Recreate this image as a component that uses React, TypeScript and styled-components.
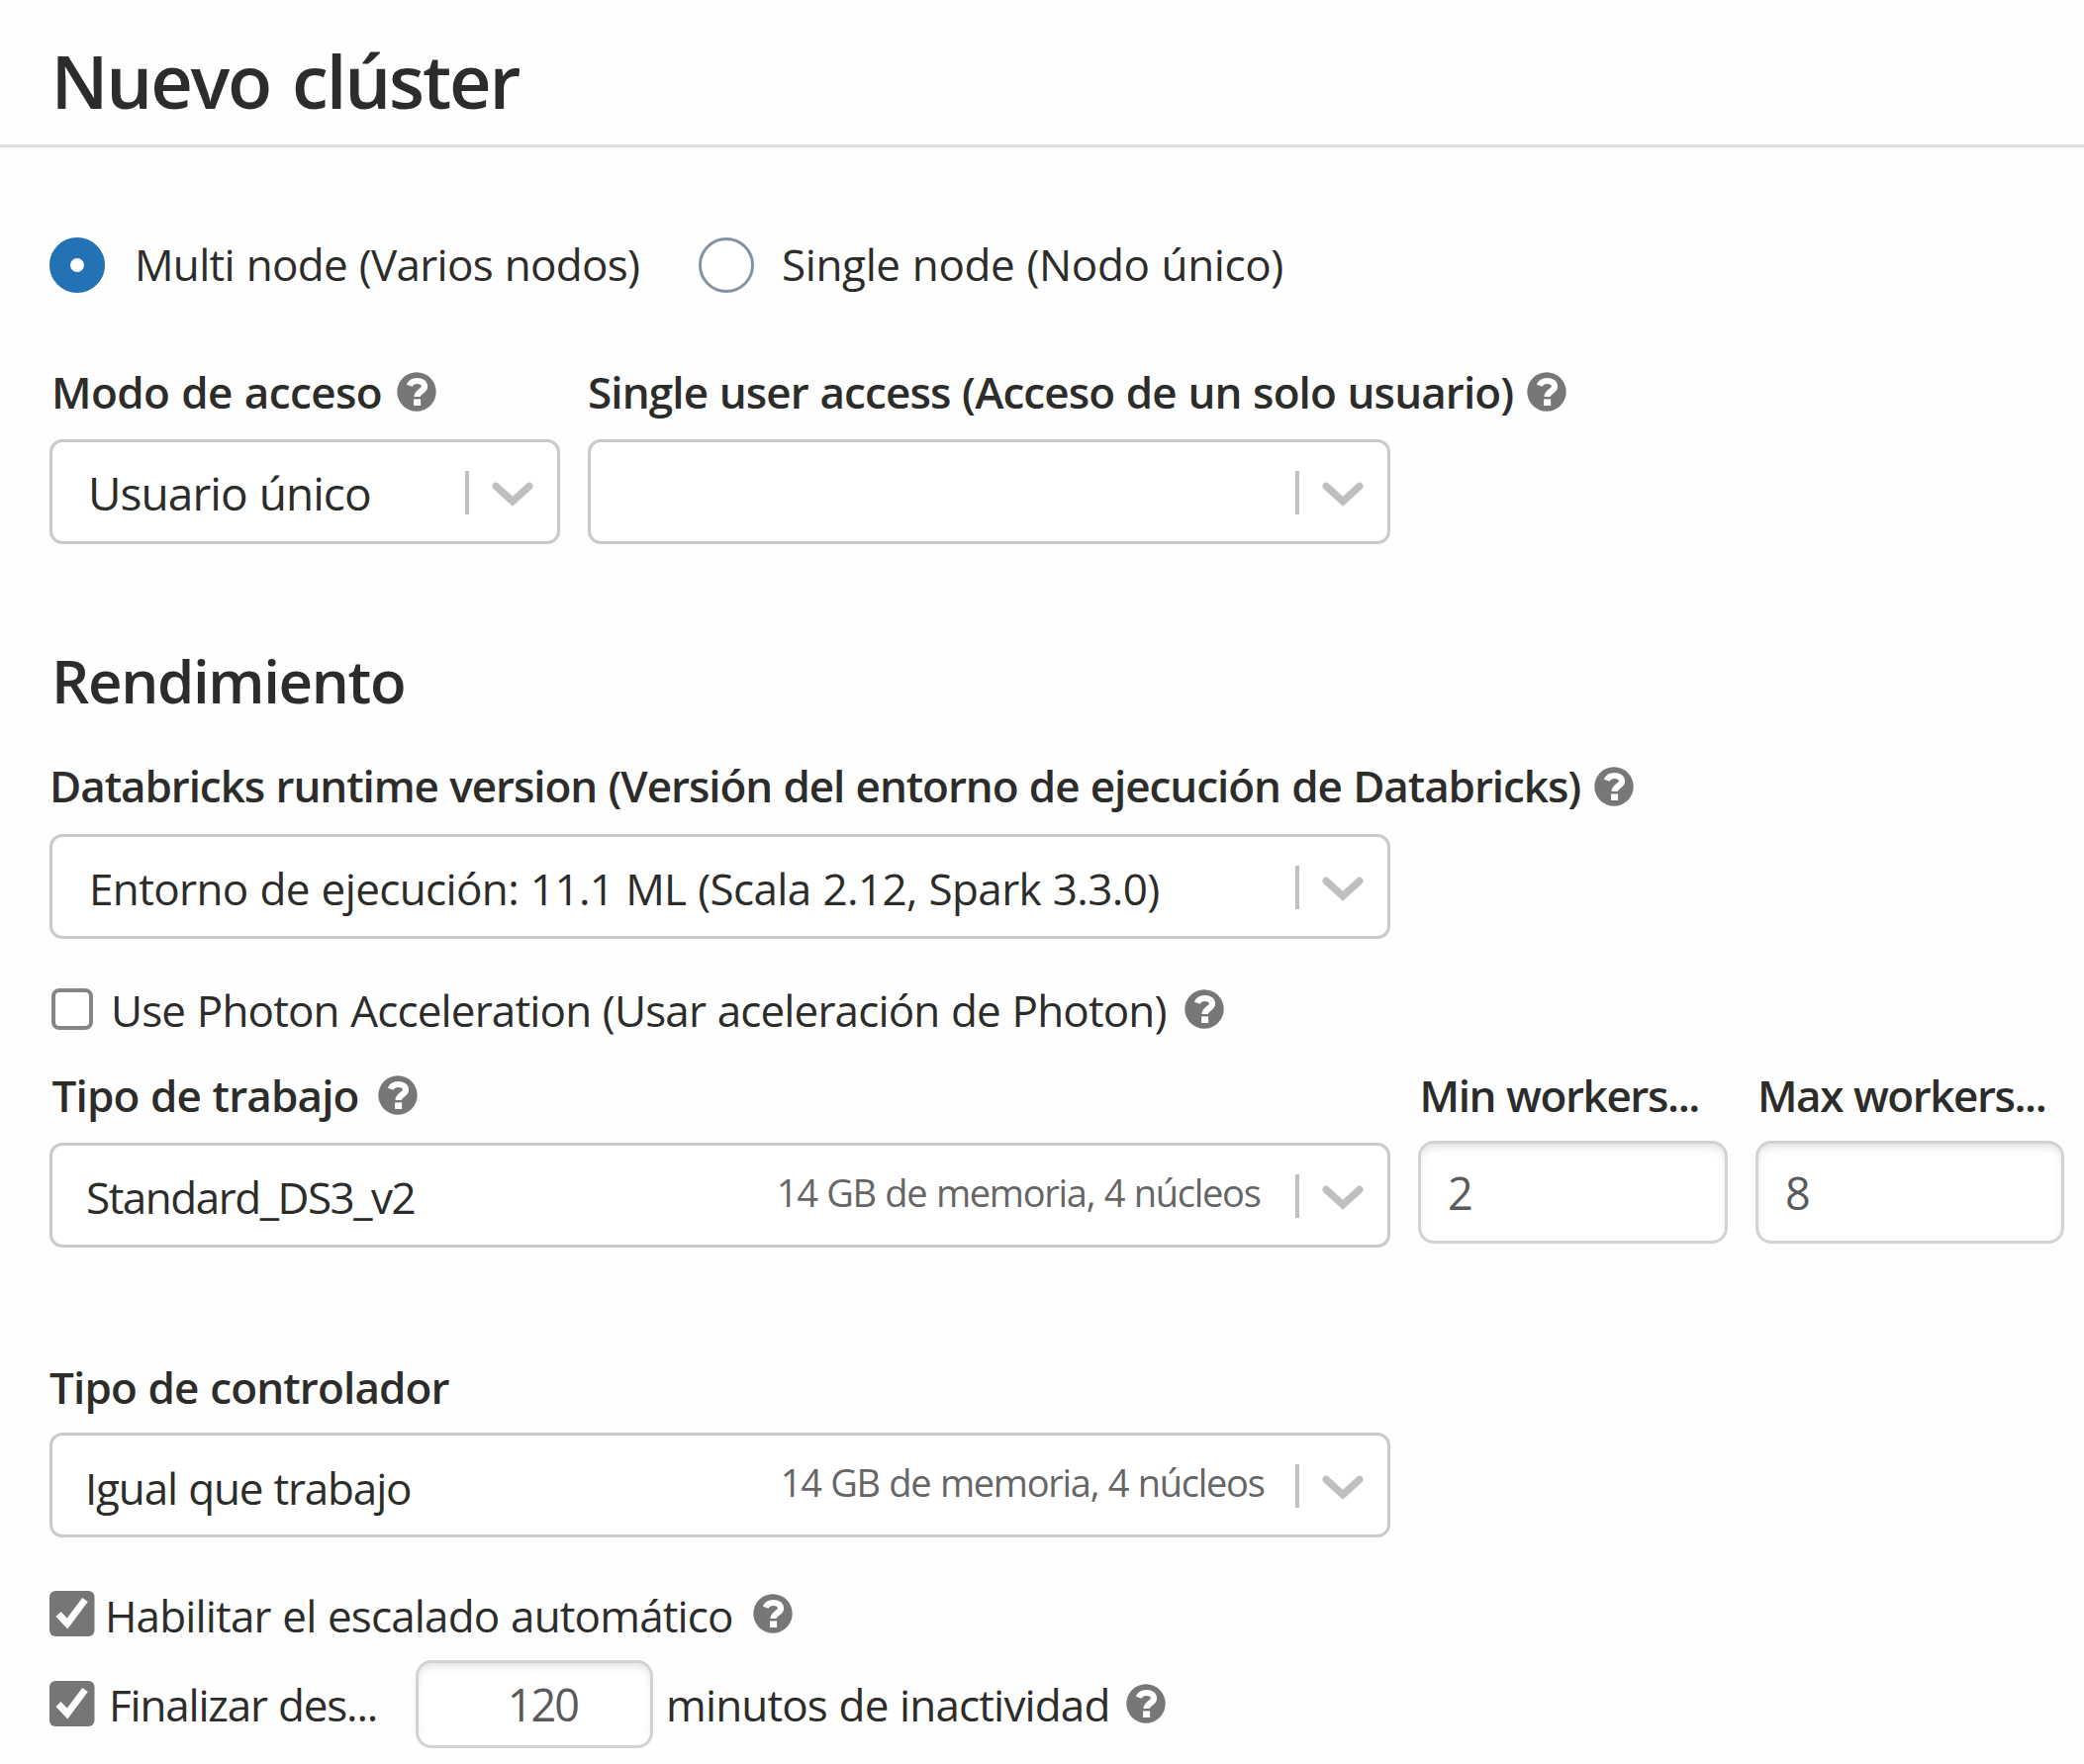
import React from "react";
import styled, { createGlobalStyle } from "styled-components";

const GlobalStyle = createGlobalStyle`
  * { box-sizing: border-box; }
  body {
    margin: 0;
    background: #fefefe;
    color: #2c2c2b;
    font-family: "Open Sans", "Noto Sans", sans-serif;
  }
`;

const Page = styled.main`
  display: flex;
  flex-direction: column;
  width: 2106px;
  height: 1783px;
  overflow: hidden;
  white-space: nowrap;
`;

const Header = styled.header`
  flex: none;
  height: 149px;
  padding: 42px 0 0 51.5px;
  border-bottom: 3px solid #dfdfdf;
`;

const Title = styled.h1`
  margin: 0;
  font-size: 74px;
  line-height: 80px;
  font-weight: 600;
  letter-spacing: -2.15px;
  word-spacing: 5px;
`;

const Form = styled.form`
  display: flex;
  flex-direction: column;
  padding-left: 50px;
`;

const Row = styled.div<{ $top: number; $height: number }>`
  display: flex;
  align-items: center;
  flex: none;
  margin-top: ${(p) => p.$top}px;
  height: ${(p) => p.$height}px;
`;

const RadioOption = styled.div<{ $width: number; $gap: number }>`
  display: flex;
  align-items: center;
  gap: ${(p) => p.$gap}px;
  width: ${(p) => p.$width}px;
`;

const Radio = styled.span<{ $checked?: boolean }>`
  flex: none;
  width: 56px;
  height: 56px;
  border-radius: 50%;
  border: ${(p) => (p.$checked ? "21px solid #2272b4" : "3px solid #8593a0")};
  background: #fff;
`;

const Text = styled.span<{ $track: number; $lift?: number; $drop?: number; $width?: number; $indent?: number }>`
  flex: none;
  font-size: 44px;
  line-height: 40px;
  letter-spacing: ${(p) => p.$track}px;
  word-spacing: 1px;
  padding-top: ${(p) => (p.$drop ?? 0) * 2}px;
  padding-bottom: ${(p) => (p.$lift ?? 0) * 2}px;
  padding-left: ${(p) => p.$indent ?? 0}px;
  width: ${(p) => (p.$width ? `${p.$width}px` : "auto")};
`;

const Label = styled(Text)`
  font-weight: 600;
`;

const Heading = styled.h2`
  margin: 108px 0 0 2px;
  font-size: 60px;
  line-height: 60px;
  font-weight: 600;
  letter-spacing: -1.35px;
`;

const SelectBox = styled.div<{ $width: number; $indent: number }>`
  display: flex;
  align-items: center;
  flex: none;
  width: ${(p) => p.$width}px;
  height: 106px;
  padding: 0 24px 0 ${(p) => p.$indent}px;
  border: 3px solid #cacaca;
  border-radius: 13px;
  background: #fff;
`;

const SelectValue = styled.span<{ $track: number; $drop: number; $size?: number }>`
  flex: 1;
  font-size: ${(p) => p.$size ?? 44}px;
  line-height: 60px;
  letter-spacing: ${(p) => p.$track}px;
  word-spacing: 1px;
  padding-top: ${(p) => p.$drop * 2}px;
`;

const SelectNote = styled.span<{ $gap: number; $lift: number }>`
  margin-right: ${(p) => p.$gap}px;
  padding-bottom: ${(p) => p.$lift * 2}px;
  color: #666;
  font-size: 38px;
  line-height: 50px;
  letter-spacing: -1.29px;
  word-spacing: 1px;
`;

const Divider = styled.span`
  flex: none;
  width: 4px;
  height: 44px;
  margin: 2px 23px 0 0;
  background: #bfbfbf;
`;

const ChevronSvg = styled.svg`
  flex: none;
  width: 42px;
  height: 26px;
  margin-top: 5px;
`;

const NumberBox = styled.div<{ $width: number; $height: number; $align?: "right" }>`
  display: flex;
  align-items: center;
  justify-content: ${(p) => (p.$align === "right" ? "flex-end" : "flex-start")};
  flex: none;
  width: ${(p) => p.$width}px;
  height: ${(p) => p.$height}px;
  padding: 0 ${(p) => (p.$align === "right" ? 73 : 0)}px 0 27px;
  border: 3px solid #d2d2d2;
  border-radius: 16px;
  background: #fff;
  box-shadow: inset 0 5px 9px -2px rgba(0, 0, 0, 0.13);
  color: #5a5a5a;
  font-size: 45px;
  letter-spacing: -2px;
`;

const Fields = styled.div<{ $top: number }>`
  display: flex;
  align-items: flex-start;
  margin-top: ${(p) => p.$top}px;
`;

const Field = styled.div<{ $gap: number; $width?: number }>`
  display: flex;
  flex-direction: column;
  flex: none;
  gap: ${(p) => p.$gap}px;
  width: ${(p) => (p.$width ? `${p.$width}px` : "auto")};
`;

const LabelLine = styled.div`
  display: flex;
  align-items: center;
  height: 40px;
`;

const HelpSvg = styled.svg`
  flex: none;
  width: 40px;
  height: 40px;
`;

const Checkbox = styled.span`
  flex: none;
  width: 42px;
  height: 42px;
  margin-left: 1.5px;
  border: 4px solid #858585;
  border-radius: 8px;
  background: #fff;
`;

const CheckSvg = styled.svg`
  flex: none;
  width: 46px;
  height: 46px;
`;

function Help() {
  return (
    <HelpSvg viewBox="0 0 40 40">
      <circle cx="20" cy="20" r="19.7" fill="#777" />
      <path
        d="M12.8 13.8C14.2 10 17 9 20.4 9C24.8 9 28 11.2 28 14.8C28 19.4 20.6 19.4 20.6 25"
        fill="none"
        stroke="#fff"
        strokeWidth="6.2"
      />
      <rect x="17.1" y="27.4" width="7" height="6.6" fill="#fff" />
    </HelpSvg>
  );
}

function Chevron() {
  return (
    <ChevronSvg viewBox="0 0 42 26">
      <path d="M4.2 4.4L21 19.8L37.8 4.4" fill="none" stroke="#bfbfbf" strokeWidth="7.4" strokeLinecap="round" />
    </ChevronSvg>
  );
}

function Checked() {
  return (
    <CheckSvg viewBox="0 0 46 46">
      <rect width="45.5" height="46" rx="6" fill="#767676" />
      <path d="M9 23.5L18 33L36 9" fill="none" stroke="#fff" strokeWidth="7" />
    </CheckSvg>
  );
}

interface SelectProps {
  width: number;
  value?: string;
  indent?: number;
  track?: number;
  drop?: number;
  size?: number;
  note?: string;
  noteGap?: number;
  noteLift?: number;
}

function Select({ width, value = "", indent = 0, track = 0, drop = 0, size, note, noteGap = 0, noteLift = 0 }: SelectProps) {
  return (
    <SelectBox $width={width} $indent={indent}>
      <SelectValue $track={track} $drop={drop} $size={size}>{value}</SelectValue>
      {note && <SelectNote $gap={noteGap} $lift={noteLift}>{note}</SelectNote>}
      <Divider />
      <Chevron />
    </SelectBox>
  );
}

export default function App() {
  return (
    <Page>
      <GlobalStyle />
      <Header>
        <Title>Nuevo clúster</Title>
      </Header>
      <Form>
        <Row $top={91} $height={56}>
          <RadioOption $width={656} $gap={30}>
            <Radio $checked />
            <Text $track={-0.7} $lift={1}>Multi node (Varios nodos)</Text>
          </RadioOption>
          <RadioOption $width={620} $gap={28}>
            <Radio />
            <Text $track={-0.37} $lift={1}>Single node (Nodo único)</Text>
          </RadioOption>
        </Row>

        <Fields $top={80}>
          <Field $gap={28} $width={543.5}>
            <LabelLine>
              <Label $track={-0.57} $indent={2} $width={351}>Modo de acceso</Label>
              <Help />
            </LabelLine>
            <Select width={516} value="Usuario único" indent={36} track={-0.95} drop={0.5} size={46} />
          </Field>
          <Field $gap={28}>
            <LabelLine>
              <Label $track={-0.88} $indent={0.5} $width={949.5}>Single user access (Acceso de un solo usuario)</Label>
              <Help />
            </LabelLine>
            <Select width={811} />
          </Field>
        </Fields>

        <Heading>Rendimiento</Heading>

        <Fields $top={57}>
          <Field $gap={28}>
            <LabelLine>
              <Label $track={-1.07} $lift={1} $width={1560.5}>
                Databricks runtime version (Versión del entorno de ejecución de Databricks)
              </Label>
              <Help />
            </LabelLine>
            <Select
              width={1354.5}
              value="Entorno de ejecución: 11.1 ML (Scala 2.12, Spark 3.3.0)"
              indent={37}
              track={-0.63}
              drop={2}
            />
          </Field>
        </Fields>

        <Row $top={50} $height={42}>
          <Checkbox />
          <Text $track={-0.85} $indent={18.5} $drop={0.5} $width={1103.5}>Use Photon Acceleration (Usar aceleración de Photon)</Text>
          <Help />
        </Row>

        <Fields $top={46}>
          <Field $gap={28} $width={1383}>
            <LabelLine>
              <Label $track={-0.86} $indent={2.5} $lift={0.5} $width={332}>Tipo de trabajo</Label>
              <Help />
            </LabelLine>
            <Select
              width={1354.5}
              value="Standard_DS3_v2"
              indent={34}
              track={-1.482}
              drop={1.5}
              note="14 GB de memoria, 4 núcleos"
              noteGap={35}
              noteLift={3.5}
            />
          </Field>
          <Field $gap={26} $width={341}>
            <LabelLine>
              <Label $track={-1.4} $indent={1.5} $lift={0.5}>Min workers...</Label>
            </LabelLine>
            <NumberBox $width={313} $height={104}>2</NumberBox>
          </Field>
          <Field $gap={26}>
            <LabelLine>
              <Label $track={-1.45} $indent={2} $lift={0.5}>Max workers...</Label>
            </LabelLine>
            <NumberBox $width={312} $height={104}>8</NumberBox>
          </Field>
        </Fields>

        <Fields $top={121}>
          <Field $gap={26}>
            <LabelLine>
              <Label $track={-0.85}>Tipo de controlador</Label>
            </LabelLine>
            <Select
              width={1354.5}
              value="Igual que trabajo"
              indent={33}
              track={-1.17}
              drop={3}
              note="14 GB de memoria, 4 núcleos"
              noteGap={31}
              noteLift={3.5}
            />
          </Field>
        </Fields>

        <Row $top={54} $height={46}>
          <Checked />
          <Text $track={-0.84} $indent={10} $drop={2} $width={665}>Habilitar el escalado automático</Text>
          <Help />
        </Row>

        <Row $top={23.5} $height={89.5}>
          <Checked />
          <Text $track={-1.19} $indent={14} $drop={1} $width={323.5}>Finalizar des...</Text>
          <NumberBox $width={240.5} $height={89.5} $align="right">120</NumberBox>
          <Text $track={-0.85} $indent={13} $drop={1} $width={478}>minutos de inactividad</Text>
          <Help />
        </Row>
      </Form>
    </Page>
  );
}
